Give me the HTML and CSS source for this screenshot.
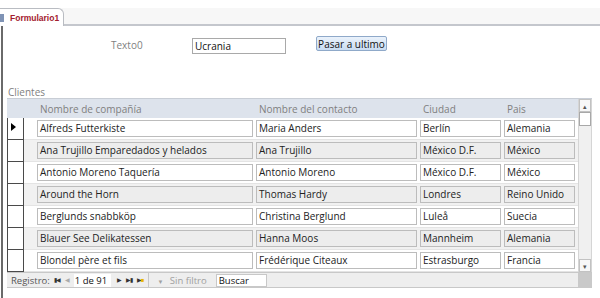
FILE: index.html
```html
<!DOCTYPE html>
<html lang="es">
<head>
    <meta charset="UTF-8">
    <title>Formulario1</title>
    <link rel="stylesheet" href="styles.css">
</head>
<body>
    <div class="tabstrip">
        <div class="tab">
            <span class="tab-icon"></span>
            <span class="tab-title">Formulario1</span>
        </div>
    </div>

    <div class="form">
        <div class="top">
            <span class="label">Texto0</span>
            <div class="textbox">Ucrania</div>
            <button class="btn">Pasar a ultimo</button>
        </div>

        <div class="sub-label">Clientes</div>

        <div class="datasheet">
            <div class="sheet-main">
                <div class="row head">
                    <div class="selector"></div>
                    <div class="hcell c1">Nombre de compañía</div>
                    <div class="hcell c2">Nombre del contacto</div>
                    <div class="hcell c3">Ciudad</div>
                    <div class="hcell c4">Pais</div>
                </div>
                <div class="row">
                    <div class="selector"><span class="pointer"></span></div>
                    <div class="cell c1">Alfreds Futterkiste</div>
                    <div class="cell c2">Maria Anders</div>
                    <div class="cell c3">Berlín</div>
                    <div class="cell c4">Alemania</div>
                </div>
                <div class="row alt">
                    <div class="selector"></div>
                    <div class="cell c1">Ana Trujillo Emparedados y helados</div>
                    <div class="cell c2">Ana Trujillo</div>
                    <div class="cell c3">México D.F.</div>
                    <div class="cell c4">México</div>
                </div>
                <div class="row">
                    <div class="selector"></div>
                    <div class="cell c1">Antonio Moreno Taquería</div>
                    <div class="cell c2">Antonio Moreno</div>
                    <div class="cell c3">México D.F.</div>
                    <div class="cell c4">México</div>
                </div>
                <div class="row alt">
                    <div class="selector"></div>
                    <div class="cell c1">Around the Horn</div>
                    <div class="cell c2">Thomas Hardy</div>
                    <div class="cell c3">Londres</div>
                    <div class="cell c4">Reino Unido</div>
                </div>
                <div class="row">
                    <div class="selector"></div>
                    <div class="cell c1">Berglunds snabbköp</div>
                    <div class="cell c2">Christina Berglund</div>
                    <div class="cell c3">Luleå</div>
                    <div class="cell c4">Suecia</div>
                </div>
                <div class="row alt">
                    <div class="selector"></div>
                    <div class="cell c1">Blauer See Delikatessen</div>
                    <div class="cell c2">Hanna Moos</div>
                    <div class="cell c3">Mannheim</div>
                    <div class="cell c4">Alemania</div>
                </div>
                <div class="row">
                    <div class="selector"></div>
                    <div class="cell c1">Blondel père et fils</div>
                    <div class="cell c2">Frédérique Citeaux</div>
                    <div class="cell c3">Estrasburgo</div>
                    <div class="cell c4">Francia</div>
                </div>
            </div>
            <div class="vscroll">
                <div class="arrow up">&#9652;</div>
                <div class="thumb"></div>
                <div class="track"></div>
                <div class="arrow down">&#9662;</div>
            </div>
        </div>

        <div class="navbar">
            <div class="nav-left">
                <span class="nav-label">Registro:</span>
                <span class="nav-btn">&#9646;&#9664;</span>
                <span class="nav-btn dim">&#9664;</span>
                <span class="nav-box">1 de 91</span>
                <span class="nav-btn">&#9654;</span>
                <span class="nav-btn">&#9654;&#9646;</span>
                <span class="nav-btn">&#9654;<span class="new">&#9632;</span></span>
                <span class="sep"></span>
                <span class="filter"><span class="funnel">&#9660;</span> Sin filtro</span>
                <span class="search">Buscar</span>
            </div>
            <div class="grip"></div>
        </div>
    </div>
</body>
</html>
```

FILE: styles.css
```css
body {
    margin: 0;
    font-family: "Open Sans", "Noto Sans", sans-serif;
    font-size: 10px;
    color: #222222;
    background-color: #ffffff;
    width: 600px;
    height: 298px;
    overflow: hidden;
}

.tabstrip {
    margin-top: 8px;
    height: 16px;
    background-color: #f7f7f7;
    border-bottom: 2px solid #c4c7cd;
    display: flex;
    align-items: flex-end;
}
.tab {
    width: 64px;
    height: 18px;
    margin-bottom: -2px;
    background-color: #ffffff;
    border-top: 1px solid #b9bcc2;
    border-right: 1px solid #b9bcc2;
    border-top-right-radius: 6px;
    display: flex;
    align-items: center;
    box-sizing: border-box;
}
.tab-icon {
    width: 4px;
    height: 8px;
    background-color: #7f93b5;
    margin-right: 6px;
}
.tab-title {
    color: #a3202e;
    font-weight: bold;
    font-size: 8.5px;
    font-family: "Liberation Sans", sans-serif;
}

.form {
    border-left: 2px solid #6a6a6a;
    margin-left: 1px;
    height: 272px;
    box-sizing: border-box;
}

.top {
    display: flex;
    align-items: flex-start;
    padding-top: 12px;
    height: 52px;
    box-sizing: border-box;
}
.label {
    margin-left: 108px;
    width: 81px;
    line-height: 14px;
    color: #7f7f7f;
}
.textbox {
    width: 94px;
    height: 16px;
    border: 1px solid #a9a9a9;
    box-sizing: border-box;
    padding-left: 2px;
    line-height: 14px;
    color: #111111;
}
.btn {
    margin-left: 30px;
    margin-top: -2px;
    height: 15px;
    width: 71px;
    padding: 0;
    font-family: inherit;
    font-size: 10px;
    color: #111111;
    background: linear-gradient(#eaf2fb, #c9dcf2);
    border: 1px solid #8fa9c9;
    border-radius: 2px;
    line-height: 12px;
}

.sub-label {
    margin-left: 5px;
    color: #7f7f7f;
    height: 20px;
    padding-top: 8px;
    line-height: 12px;
    box-sizing: border-box;
}

.datasheet {
    display: flex;
    margin-left: 4px;
    width: 585px;
    border-top: 1px solid #c8cdd5;
}
.sheet-main {
    width: 571px;
}
.row {
    display: flex;
    align-items: center;
    height: 22px;
    border-bottom: 1px solid #e4e4e4;
    box-sizing: border-box;
}
.row.head {
    height: 19px;
    background-color: #dde3ec;
    border-bottom: none;
}
.row.alt {
    background-color: #f1f1f1;
}
.selector {
    width: 15px;
    height: 100%;
    border-left: 1px solid #4a4a4a;
    border-right: 1px solid #4a4a4a;
    border-bottom: 1px solid #4a4a4a;
    background-color: #ffffff;
    margin-right: 13px;
    margin-bottom: -1px;
    position: relative;
}
.row.head .selector {
    background-color: #dde3ec;
    border-color: #dde3ec;
}
.pointer {
    position: absolute;
    left: 3px;
    top: 5px;
    border-left: 5px solid #000000;
    border-top: 4px solid transparent;
    border-bottom: 4px solid transparent;
}
.hcell {
    color: #7f7f7f;
    padding-left: 3px;
    box-sizing: border-box;
}
.cell {
    height: 17px;
    border: 1px solid #bcbcbc;
    box-sizing: border-box;
    padding-left: 2px;
    line-height: 15px;
    white-space: nowrap;
    overflow: hidden;
    background-color: #ffffff;
}
.row.alt .cell {
    background-color: #ededed;
}
.c1 { width: 216px; }
.c2 { width: 161px; margin-left: 3px; }
.c3 { width: 81px; margin-left: 3px; }
.c4 { width: 71px; margin-left: 3px; }

.vscroll {
    width: 14px;
    border-left: 1px solid #d5d5d5;
    border-right: 1px solid #d5d5d5;
    background-color: #f0f0f0;
    display: flex;
    flex-direction: column;
    box-sizing: border-box;
}
.arrow {
    height: 13px;
    font-size: 7px;
    line-height: 13px;
    text-align: center;
    color: #555555;
    background-color: #f7f7f7;
    border: 1px solid #c2c2c2;
    box-sizing: border-box;
}
.thumb {
    height: 14px;
    background-color: #ffffff;
    border: 1px solid #a8a8a8;
    box-sizing: border-box;
}
.track {
    flex: 1;
}

.navbar {
    display: flex;
    margin-left: 4px;
    width: 585px;
    height: 15px;
    border-top: 1px solid #c8c8c8;
}
.nav-left {
    flex: 1;
    display: flex;
    align-items: center;
    white-space: nowrap;
    font-size: 9.5px;
    background-color: #eeeeee;
    border-bottom: 1px solid #c8c8c8;
    color: #555555;
}
.nav-label {
    margin-left: 4px;
    margin-right: 4px;
}
.nav-btn {
    font-size: 6px;
    color: #333333;
    margin-right: 5px;
    letter-spacing: -1px;
}
.nav-btn.dim {
    color: #aaaaaa;
}
.new {
    color: #e8b400;
    font-size: 6px;
}
.nav-box {
    background-color: #ffffff;
    height: 13px;
    line-height: 13px;
    width: 37px;
    padding-left: 1px;
    color: #111111;
    margin-right: 6px;
    box-sizing: border-box;
}
.sep {
    width: 1px;
    height: 14px;
    background-color: #c8c8c8;
    margin: 0 8px 0 0;
}
.filter {
    color: #a0a0a0;
    margin-right: 9px;
}
.funnel {
    font-size: 6px;
    margin-right: 4px;
}
.search {
    background-color: #ffffff;
    border: 1px solid #c8c8c8;
    width: 51px;
    height: 13px;
    line-height: 11px;
    box-sizing: border-box;
    padding-left: 2px;
    color: #111111;
}
.grip {
    width: 14px;
    background-color: #c9c9c9;
}
```
